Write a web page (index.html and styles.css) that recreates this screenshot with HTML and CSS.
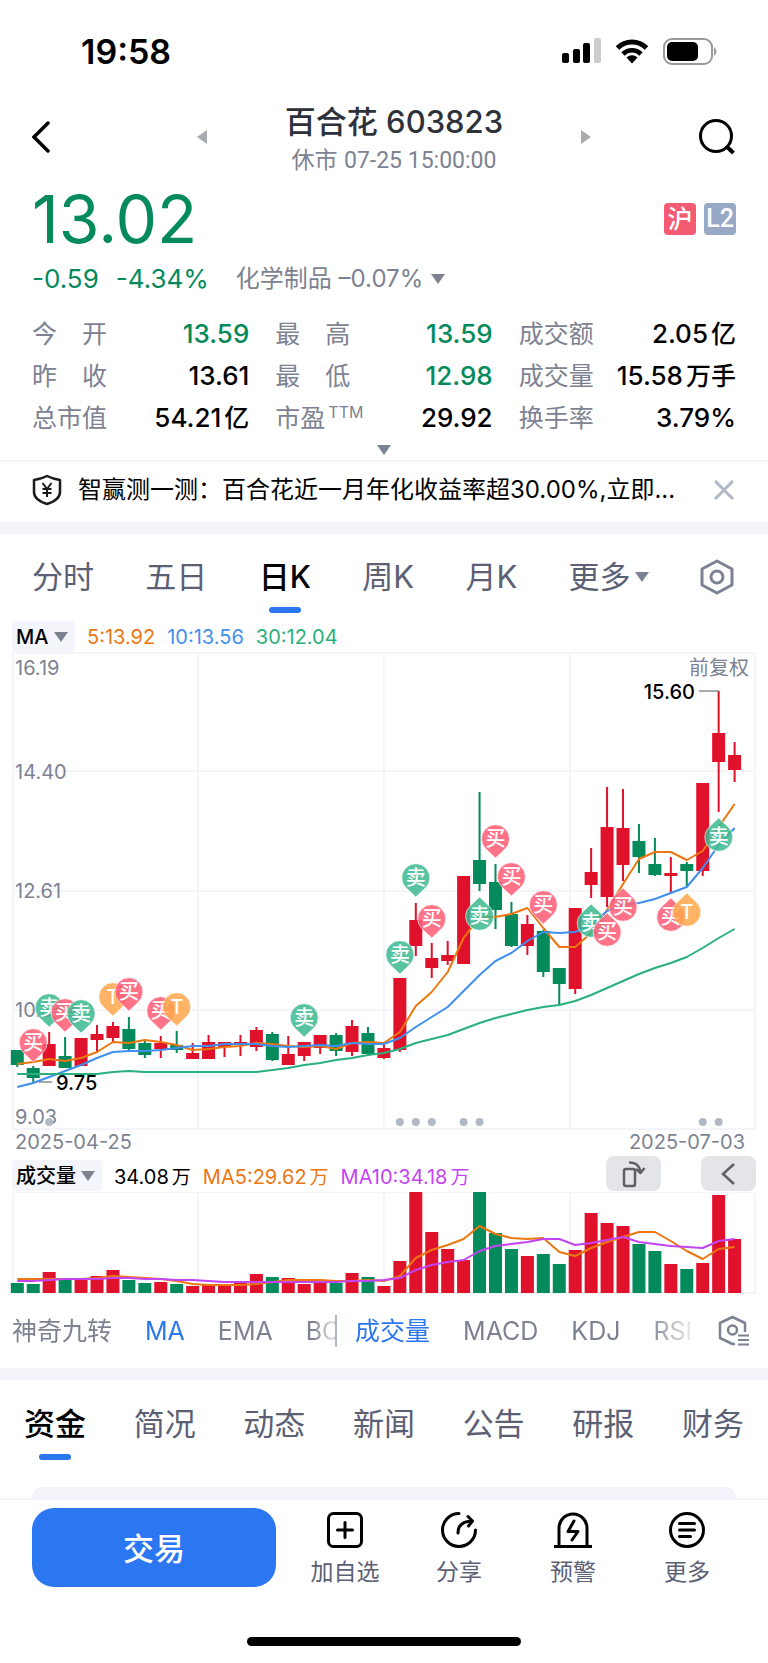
FILE: index.html
```html
<!DOCTYPE html>
<html lang="zh-CN">
<head>
    <meta charset="UTF-8">
    <meta name="viewport" content="width=device-width, initial-scale=1">
    <title>百合花 603823</title>
    <link rel="stylesheet" href="styles.css">
</head>
<body>
<div class="status-bar">
    <span class="clock">19:58</span>
    <div class="status-icons">
        <svg width="39" height="26" viewBox="0 0 39 26">
            <rect x="0" y="15" width="7" height="10" rx="2"/>
            <rect x="11" y="11" width="7" height="14" rx="2"/>
            <rect x="21" y="5" width="7" height="20" rx="2"/>
            <rect x="32" y="0" width="7" height="25" rx="2" fill="#cccccc"/>
        </svg>
        <svg width="34" height="26" viewBox="0 0 34 26" fill="none" stroke="#000" stroke-width="5">
            <path d="M2.500 10A20.500 20.500 0 0 1 31.500 10"/>
            <path d="M8 16A12.800 12.800 0 0 1 26 16" stroke-width="4.600"/>
            <path d="M11.500 19.500A8 8 0 0 1 22.500 19.500L17 25.500Z" fill="#000" stroke="none"/>
        </svg>
        <svg width="54" height="27" viewBox="0 0 54 27">
            <rect x="1" y="1" width="48" height="25" rx="8" fill="none" stroke="#999" stroke-width="2"/>
            <rect x="4" y="4" width="31" height="19" rx="5"/>
            <path d="M51 9Q56 13.500 51 18Z" fill="#999"/>
        </svg>
    </div>
</div>

<header class="header">
    <button class="icon-btn" aria-label="返回">
        <svg width="20" height="34" viewBox="0 0 20 34" fill="none" stroke="#000" stroke-width="3.500" stroke-linecap="round"><path d="M16 3L2 17L16 31"/></svg>
    </button>
    <div class="switcher">
        <button class="icon-btn" aria-label="上一只">
            <svg width="10" height="14" viewBox="0 0 10 14" fill="#a9abb0"><path d="M10 0V14L0 7Z"/></svg>
        </button>
        <div class="title">
            <h1>百合花 603823</h1>
            <p>休市 <span class="din">07-25 15:00:00</span></p>
        </div>
        <button class="icon-btn" aria-label="下一只">
            <svg width="10" height="14" viewBox="0 0 10 14" fill="#a9abb0"><path d="M0 0V14L10 7Z"/></svg>
        </button>
    </div>
    <button class="icon-btn" aria-label="搜索">
        <svg width="37" height="36" viewBox="0 0 37 36" fill="none" stroke="#000" stroke-width="3"><circle cx="17" cy="17" r="15.500"/><path d="M27 27L34.500 34" stroke-width="4"/></svg>
    </button>
</header>

<section class="quote">
    <div class="price-row">
        <span class="price">13.02</span>
        <span class="badge badge-sh">沪</span>
        <span class="badge badge-l2">L2</span>
    </div>
    <div class="change-row">
        <span class="down">-0.59</span>
        <span class="down">-4.34%</span>
        <button class="industry">化学制品 –0.07% <svg class="caret" viewBox="0 0 14 10"><path d="M0 0H14L7 10Z"/></svg></button>
    </div>
    <dl class="stats">
        <div><dt>今　开</dt><dd class="down">13.59</dd></div>
        <div><dt>最　高</dt><dd class="down">13.59</dd></div>
        <div><dt>成交额</dt><dd>2.05<span class="unit">亿</span></dd></div>
        <div><dt>昨　收</dt><dd>13.61</dd></div>
        <div><dt>最　低</dt><dd class="down">12.98</dd></div>
        <div><dt>成交量</dt><dd>15.58<span class="unit">万手</span></dd></div>
        <div><dt>总市值</dt><dd>54.21<span class="unit">亿</span></dd></div>
        <div><dt>市盈<sup>TTM</sup></dt><dd>29.92</dd></div>
        <div><dt>换手率</dt><dd>3.79%</dd></div>
    </dl>
    <button class="expand" aria-label="展开">
        <svg class="caret" viewBox="0 0 14 10"><path d="M0 0H14L7 10Z"/></svg>
    </button>
</section>

<div class="notice">
    <svg width="30" height="32" viewBox="0 0 30 32" fill="none" stroke="#1a1a1a" stroke-width="2.500" stroke-linejoin="round">
        <path d="M15 2Q21 5 28 6V18Q28 26 15 30Q2 26 2 18V6Q9 5 15 2Z"/>
        <path d="M10.500 9L15 15L19.500 9M15 15V23M10.500 15H19.500M10.500 19H19.500" stroke-width="2"/>
    </svg>
    <p>智赢测一测：百合花近一月年化收益率超30.00%,立即...</p>
    <button class="icon-btn" aria-label="关闭">
        <svg width="22" height="20" viewBox="0 0 22 20" fill="none" stroke="#b3b8c6" stroke-width="3"><path d="M1 1L19 19M19 1L1 19"/></svg>
    </button>
</div>

<nav class="tabs period-tabs">
    <button>分时</button>
    <button>五日</button>
    <button class="active">日K</button>
    <button>周K</button>
    <button>月K</button>
    <button class="more">更多<svg class="caret" viewBox="0 0 14 10"><path d="M0 0H14L7 10Z"/></svg></button>
    <button aria-label="设置">
        <svg width="36" height="36" viewBox="0 0 36 36" fill="none" stroke="#7d8292" stroke-width="3" stroke-linejoin="round"><path d="M17 2L32 10V26L17 34L2 26V10Z"/><circle cx="17" cy="18" r="6"/></svg>
    </button>
</nav>

<section class="chart">
    <div class="legend">
        <label class="picker">
            <select aria-label="主图指标"><option>MA</option></select>
            <svg class="caret" viewBox="0 0 14 10"><path d="M0 0H14L7 10Z"/></svg>
        </label>
        <span class="ma5">5:13.92</span>
        <span class="ma10">10:13.56</span>
        <span class="ma30">30:12.04</span>
    </div>
    <svg class="plot" id="klineChart" viewBox="0 0 768 478"></svg>
    <div class="dates"><span>2025-04-25</span><span>2025-07-03</span></div>

    <div class="legend legend-volume">
        <label class="picker">
            <select aria-label="副图指标"><option>成交量</option></select>
            <svg class="caret" viewBox="0 0 14 10"><path d="M0 0H14L7 10Z"/></svg>
        </label>
        <span>34.08<span class="unit">万</span></span>
        <span class="ma5">MA5:29.62<span class="unit">万</span></span>
        <span class="vma10">MA10:34.18<span class="unit">万</span></span>
        <div class="chart-btns">
            <button aria-label="横屏">
                <svg width="24" height="28" viewBox="0 0 24 28" fill="none" stroke="#5f6064" stroke-width="2.500" stroke-linejoin="round"><rect x="2" y="9" width="11" height="17" rx="2"/><path d="M7 2.500Q17 2 18.500 12M14 9L18.500 13L22.500 8"/></svg>
            </button>
            <button aria-label="收起">
                <svg width="24" height="28" viewBox="0 0 24 28" fill="none" stroke="#5f6064" stroke-width="2.500"><path d="M17 4L6 14L17 24"/></svg>
            </button>
        </div>
    </div>
    <svg class="plot" id="volumeChart" viewBox="0 0 768 102"></svg>

    <div class="indicators">
        <div class="group group-main">
            <button>神奇九转</button>
            <button class="active">MA</button>
            <button>EMA</button>
            <button>BOLL</button>
        </div>
        <div class="group group-sub">
            <button class="active">成交量</button>
            <button>MACD</button>
            <button>KDJ</button>
            <button>RSI</button>
        </div>
        <button class="icon-btn" aria-label="指标设置">
            <svg width="32" height="32" viewBox="0 0 32 32" fill="none" stroke="#7d8292" stroke-width="2.500" stroke-linejoin="round"><path d="M27 17V8L14.500 2L2 8V23L14.500 29H17"/><circle cx="14.500" cy="15" r="4.500"/><path d="M20 20.500H31M20 25H31M20 29.500H31" stroke-width="2"/></svg>
        </button>
    </div>
</section>

<nav class="tabs info-tabs">
    <button class="active">资金</button>
    <button>简况</button>
    <button>动态</button>
    <button>新闻</button>
    <button>公告</button>
    <button>研报</button>
    <button>财务</button>
</nav>
<div class="card"></div>

<footer class="bottom-bar">
    <button class="trade">交易</button>
    <button class="action">
        <svg viewBox="0 0 36 36"><rect x="1.500" y="1.500" width="33" height="33" rx="5"/><path d="M18 10.500V25.500M10.500 18H25.500"/></svg>
        加自选
    </button>
    <button class="action">
        <svg viewBox="0 0 36 36"><path d="M18 1.500A16.500 16.500 0 1 0 34.500 18"/><path d="M17 21Q17 10 30 9M27 4.500L31.500 9L27.500 14"/></svg>
        分享
    </button>
    <button class="action">
        <svg viewBox="0 0 38 36"><path d="M5 34V16A14 14 0 0 1 33 16V34M0 34.500H38"/><path d="M20 9L14 19.500H24L18 28"/></svg>
        预警
    </button>
    <button class="action">
        <svg viewBox="0 0 36 36"><circle cx="18" cy="18" r="16.500"/><path d="M10.500 11.500H25.500M10.500 18H25.500M10.500 24.500H21.500"/></svg>
        更多
    </button>
</footer>
<div class="home-indicator"></div>

<script src="chart.js"></script>
</body>
</html>
```
FILE: styles.css
```css
* {
    box-sizing: border-box;
}

body {
    margin: 0;
    background-color: #fff;
    color: #000;
    font-family: Inter, "Noto Sans CJK SC", sans-serif;
}

h1, p, dl, dd {
    margin: 0;
}

svg {
    display: block;
    flex-shrink: 0;
}

button {
    background: none;
    border: none;
    padding: 0;
    color: inherit;
    font: inherit;
    white-space: nowrap;
    cursor: pointer;
}

.icon-btn {
    flex-shrink: 0;
}

.caret {
    width: 14px;
    height: 10px;
    fill: #7d8292;
}

.unit {
    margin-left: 3px;
}

.down {
    color: #048a5b;
}

.ma5 {
    color: #ec7711;
}

.ma10 {
    color: #3f90ee;
}

.ma30 {
    color: #29b07c;
}

.vma10 {
    color: #c344f2;
}

/* status bar */
.status-bar {
    display: flex;
    justify-content: space-between;
    align-items: center;
    height: 95px;
    padding: 8px 51px 0 81px;
}

.clock {
    font-size: 34px;
    font-weight: 600;
}

.status-icons {
    display: flex;
    gap: 14px;
}

/* header */
.header {
    display: flex;
    align-items: center;
    justify-content: space-between;
    height: 84px;
    padding: 0 32px;
}

.switcher {
    display: flex;
    align-items: center;
    justify-content: space-between;
    width: 394px;
    margin-left: 37px;
}

.title {
    padding-top: 8px;
    text-align: center;
    color: #2d3139;
}

.title h1 {
    font-size: 31px;
    font-weight: 500;
    line-height: 38px;
}

.title p {
    font-size: 23px;
    line-height: 38px;
    color: #7d8292;
}

.din {
    font-family: Roboto, sans-serif;
}

/* quote */
.quote {
    padding: 0 32px;
}

.price-row {
    display: flex;
    align-items: center;
    gap: 8px;
}

.price {
    margin-right: auto;
    font-size: 66px;
    line-height: 80px;
    color: #048a5b;
}

.badge {
    width: 32px;
    height: 32px;
    border-radius: 4px;
    color: #fff;
    font-size: 25px;
    line-height: 32px;
    text-align: center;
}

.badge-sh {
    background-color: #f45b73;
    font-weight: 500;
}

.badge-l2 {
    background-color: #97a9c5;
    font-family: Roboto, sans-serif;
    font-weight: 500;
}

.change-row {
    display: flex;
    gap: 17px;
    font-size: 26px;
    line-height: 40px;
}

.industry {
    display: flex;
    align-items: center;
    gap: 8px;
    margin-left: 10px;
    font-size: 24px;
    color: #7d8292;
}

.stats {
    display: grid;
    grid-template-columns: repeat(3, 1fr);
    column-gap: 26px;
    margin-top: 14px;
    font-size: 25px;
    line-height: 42px;
}

.stats > div {
    display: flex;
    justify-content: space-between;
    height: 42px;
    white-space: nowrap;
}

.stats dt {
    color: #7d8292;
}

.stats dd {
    font-size: 26px;
    font-weight: 500;
}

.stats .unit {
    font-size: 25px;
}

.stats sup {
    margin-left: 3px;
    font-size: 16px;
    line-height: 16px;
}

.expand {
    display: flex;
    align-items: center;
    justify-content: center;
    width: 100%;
    height: 21px;
}

/* notice */
.notice {
    display: flex;
    align-items: center;
    gap: 16px;
    height: 62px;
    padding: 0 32px 4px;
    border-top: 2px solid #f4f5fa;
}

.notice p {
    flex: 1;
    min-width: 0;
    overflow: hidden;
    font-size: 24px;
    line-height: 36px;
    white-space: nowrap;
}

/* tabs */
.tabs {
    display: flex;
    align-items: flex-start;
    justify-content: space-between;
    border-top: 12px solid #f4f5fa;
    color: #5b6074;
    font-size: 31px;
}

.tabs button {
    display: flex;
    align-items: center;
    height: 60px;
    line-height: 48px;
    padding-bottom: 12px;
}

.tabs .more {
    gap: 4px;
}

.tabs .active {
    position: relative;
    color: #000;
    font-weight: 500;
}

.tabs .active::after {
    content: "";
    position: absolute;
    left: 50%;
    bottom: 0;
    width: 32px;
    height: 6px;
    margin-left: -16px;
    border-radius: 3px;
    background-color: #2b76f1;
}

.period-tabs {
    padding: 19px 32px 8px;
}

.info-tabs {
    padding: 20px 24px 27px;
}

/* chart */
.legend {
    display: flex;
    align-items: center;
    gap: 12px;
    height: 31px;
    padding: 0 12px;
    font-size: 20px;
    white-space: nowrap;
}

.legend .unit {
    font-size: 19px;
}

.picker {
    display: flex;
    align-items: center;
    gap: 5px;
    height: 31px;
    padding: 0 7px 0 4px;
    border-radius: 4px;
    background-color: #f4f5fa;
}

.picker select {
    appearance: none;
    padding: 0;
    border: none;
    background: none;
    color: #000;
    font: inherit;
    font-weight: 500;
}

.legend-volume {
    height: 36px;
    padding-top: 3px;
}

.chart-btns {
    display: flex;
    align-self: flex-end;
    gap: 40px;
    margin: 0 0 1px auto;
}

.chart-btns button {
    display: flex;
    align-items: center;
    justify-content: center;
    width: 55px;
    height: 35px;
    border-radius: 8px;
    background-color: #e4e5e8;
}

.plot {
    width: 100%;
    height: auto;
}

.plot text {
    font-size: 20px;
    fill: #7d8292;
}

.plot .peak {
    font-weight: 500;
    fill: #000;
}

.plot .pin-text {
    font-weight: 500;
    fill: #fff;
    text-anchor: middle;
}

.grid {
    fill: none;
    stroke: #f4f5fa;
    stroke-width: 2;
}

.line {
    fill: none;
    stroke: currentColor;
    stroke-width: 2;
    stroke-linejoin: round;
}

.dates {
    display: flex;
    justify-content: space-between;
    height: 26px;
    padding: 0 23px 0 15px;
    font-size: 20px;
    line-height: 24px;
    color: #7d8292;
}

.indicators {
    display: flex;
    align-items: center;
    height: 74px;
    padding: 0 18px 0 12px;
    color: #7d8292;
    font-size: 25px;
}

.indicators .active {
    color: #2b76f1;
}

.group {
    display: flex;
    gap: 33px;
    overflow: hidden;
    line-height: 32px;
}

.group-main {
    flex: 324 1 0;
    border-right: 2px solid #b3b8c6;
    mask-image: linear-gradient(to left, #000 2px, rgba(0, 0, 0, 0.2) 3px, #000 24px);
}

.group-sub {
    flex: 346 1 0;
    margin: 0 18px;
    mask-image: linear-gradient(to left, transparent, #000 54px);
}

/* bottom */
.card {
    height: 11px;
    margin: 0 32px;
    border-radius: 14px 14px 0 0;
    background-color: #f4f5fa;
}

.bottom-bar {
    display: flex;
    padding: 8px 24px 0 32px;
    border-top: 2px solid #f4f5fa;
}

.trade {
    width: 244px;
    height: 79px;
    margin-right: 12px;
    padding-bottom: 3px;
    border-radius: 22px;
    background-color: #2b76f1;
    color: #fff;
    font-size: 31px;
    font-weight: 500;
}

.action {
    display: flex;
    flex: 1;
    flex-direction: column;
    align-items: center;
    gap: 8px;
    padding-top: 4px;
    color: #5b6074;
    font-size: 23px;
    line-height: 32px;
}

.action svg {
    height: 36px;
    fill: none;
    stroke: #000;
    stroke-width: 3;
    stroke-linecap: round;
    stroke-linejoin: round;
}

.home-indicator {
    width: 274px;
    height: 9px;
    margin: 49px auto 17px;
    border-radius: 5px;
    background-color: #000;
}
```
FILE: chart.js
```javascript
const RED = "#e0112b";
const GREEN = "#048a5b";
const STEP = 15.94;
const FIRST = 17.3;

// up/down, high, body top, body bottom, low, top of the volume bar
const bars = [
    ["g", 398, 398, 413, 415, 91], ["g", 414, 416, 426, 430, 92], ["r", 380, 392, 414, 414, 80],
    ["g", 385, 404, 416, 416, 88], ["r", 386, 386, 414, 414, 88], ["r", 373, 382, 388, 401, 84],
    ["r", 370, 374, 386, 390, 78], ["g", 365, 377, 397, 399, 88], ["g", 389, 391, 403, 406, 91],
    ["r", 384, 391, 397, 406, 90], ["g", 379, 393, 398, 401, 92], ["r", 391, 401, 407, 407, 94],
    ["r", 383, 390, 407, 407, 92], ["r", 390, 390, 395, 405, 93], ["r", 383, 390, 392, 404, 91],
    ["r", 375, 378, 395, 399, 82], ["g", 380, 382, 408, 409, 85], ["r", 384, 402, 413, 413, 86],
    ["r", 390, 390, 404, 409, 92], ["r", 383, 383, 396, 402, 91], ["g", 381, 383, 399, 404, 91],
    ["r", 368, 374, 400, 404, 81], ["g", 375, 381, 402, 402, 85], ["r", 390, 396, 406, 407, 94],
    ["r", 326, 326, 398, 400, 69], ["r", 251, 268, 294, 304, 0], ["r", 291, 306, 316, 326, 40],
    ["r", 289, 303, 309, 313, 57], ["r", 224, 224, 312, 312, 68], ["g", 140, 208, 232, 239, 0],
    ["g", 212, 230, 258, 277, 41], ["g", 250, 262, 294, 295, 57], ["r", 263, 272, 294, 303, 64],
    ["g", 278, 279, 320, 325, 62], ["g", 316, 316, 332, 353, 72], ["r", 256, 256, 337, 342, 58],
    ["r", 196, 220, 233, 246, 21], ["r", 135, 175, 245, 255, 31], ["r", 137, 176, 213, 229, 34],
    ["g", 172, 189, 205, 221, 52], ["g", 186, 212, 223, 224, 59], ["r", 205, 221, 224, 240, 72],
    ["g", 210, 212, 219, 235, 77], ["r", 131, 131, 219, 224, 71], ["r", 39, 81, 110, 160, 3],
    ["r", 90, 103, 118, 130, 47]
];

const ma5 = [412, 410, 407, 409, 406, 400, 390, 391, 388, 390, 393, 398, 397, 395, 394, 391, 392, 394, 395, 394, 397, 391, 390, 391, 380, 354, 340, 320, 286, 265, 265, 262, 256, 276, 295, 295, 281, 258, 232, 207, 200, 200, 208, 199, 175, 152];
const ma10 = [435, 431, 425, 419, 413, 406, 400, 399, 399, 398, 396, 394, 394, 392, 392, 392, 394, 395, 394, 393, 394, 391, 392, 392, 386, 375, 365, 355, 339, 323, 309, 301, 289, 280, 281, 280, 273, 259, 253, 251, 247, 241, 235, 216, 193, 176];
const ma30 = [422, 422, 422, 422, 422, 422, 420, 419, 420, 420, 420, 420, 420, 420, 420, 420, 418, 416, 413, 411, 408, 406, 403, 401, 397, 391, 387, 383, 377, 371, 366, 362, 358, 355, 353, 349, 343, 336, 329, 322, 316, 311, 305, 296, 286, 277];
const volMa5 = [87, 87, 87, 87, 87, 86, 84, 85, 86, 87, 89, 92, 93, 93, 93, 92, 90, 88, 88, 88, 89, 89, 88, 89, 84, 66, 58, 53, 47, 34, 42, 46, 47, 46, 60, 64, 56, 50, 45, 40, 40, 49, 59, 67, 57, 55];
const volMa10 = [89, 89, 88, 87, 87, 87, 86, 86, 87, 87, 88, 88, 89, 90, 90, 90, 90, 90, 90, 90, 90, 89, 89, 88, 86, 78, 73, 70, 68, 59, 54, 52, 50, 47, 47, 53, 51, 48, 45, 50, 52, 54, 55, 56, 49, 47];

// bar index, label, centre, tip direction
const pins = [
    [1, "买", 391, "down"], [2, "卖", 356, "down"], [3, "买", 361, "down"], [4, "卖", 362, "down"],
    [6, "T", 345, "down"], [7, "买", 340, "down"], [9, "买", 359, "down"], [10, "T", 355, "down"],
    [18, "卖", 366, "down"], [24, "卖", 303, "down"], [25, "卖", 226, "down"], [26, "买", 267, "down"],
    [29, "卖", 264, "up"], [30, "买", 187, "down"], [31, "买", 225, "down"], [33, "买", 253, "down"],
    [36, "卖", 271, "up"], [37, "买", 280, "up"], [38, "买", 255, "up"], [41, "买", 265, "up"],
    [42, "T", 260, "up"], [44, "卖", 185, "up"]
];
const pinColors = { "买": "#ff5c74", "卖": "#3cb991", "T": "#ffa64d" };
const eventDots = [2, 24, 25, 26, 28, 29, 43, 44];

function barX(index) {
    return FIRST + index * STEP;
}

function drawLine(values, className) {
    const points = values.map((y, i) => `${barX(i).toFixed(1)},${y}`).join(" ");
    return `<polyline class="line ${className}" points="${points}"/>`;
}

function drawPin([index, label, y, tip]) {
    const turn = tip === "up" ? ' transform="rotate(180)"' : "";
    return `<g transform="translate(${barX(index).toFixed(1)} ${y})">
        <path${turn} d="M-9.500 10A14 14 0 1 1 9.500 10L0 19Z" fill="${pinColors[label]}" fill-opacity="0.86" stroke="#fff" stroke-opacity="0.6"/>
        <text class="pin-text" y="7">${label}</text>
    </g>`;
}

function drawKline() {
    let html = '<path class="grid" d="M13 1H755V477H13ZM13 119H755M13 239H755M13 358H755M198 1V477M384 1V477M570 1V477"/>';
    [["16.19", 23], ["14.40", 127], ["12.61", 246], ["10.82", 365], ["9.03", 472]].forEach(([label, y]) => {
        html += `<text x="15" y="${y}">${label}</text>`;
    });
    html += '<text x="749" y="23" text-anchor="end">前复权</text>';

    bars.forEach(([dir, high, top, bottom, low], i) => {
        const color = dir === "r" ? RED : GREEN;
        const x = barX(i);
        html += `<rect x="${x - 1}" y="${high}" width="2" height="${low - high}" fill="${color}"/>`;
        html += `<rect x="${x - 6.5}" y="${top}" width="13" height="${bottom - top}" fill="${color}"/>`;
    });

    html += drawLine(ma5, "ma5") + drawLine(ma10, "ma10") + drawLine(ma30, "ma30");
    html += '<path d="M699 39H719M39 430H52" stroke="#555"/>';
    html += '<text class="peak" x="695" y="47" text-anchor="end">15.60</text>';
    html += '<text class="peak" x="56" y="438">9.75</text>';
    eventDots.forEach(i => {
        html += `<circle cx="${barX(i)}" cy="470" r="4" fill="#b3b8c6"/>`;
    });
    html += pins.map(drawPin).join("");
    document.getElementById("klineChart").innerHTML = html;
}

function drawVolume() {
    let html = '<path class="grid" d="M13 0H755V101H13ZM198 0V101M384 0V101M570 0V101"/>';
    bars.forEach((bar, i) => {
        const color = bar[0] === "r" ? RED : GREEN;
        html += `<rect x="${barX(i) - 6.5}" y="${bar[5]}" width="13" height="${101 - bar[5]}" fill="${color}"/>`;
    });
    html += drawLine(volMa5, "ma5") + drawLine(volMa10, "vma10");
    document.getElementById("volumeChart").innerHTML = html;
}

drawKline();
drawVolume();
```
